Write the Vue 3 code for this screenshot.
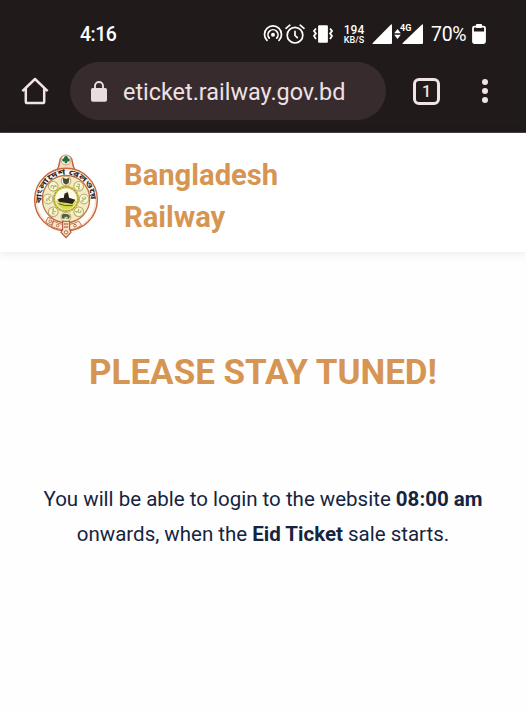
<script setup>
const medallions = [0, 45, 90, 135, 180, 225, 270, 315]
const spokes = Array.from({ length: 24 }, (_, i) => i * 15)
</script>

<template>
  <div class="screen">
    <div class="chrome">
      <div class="status">
        <span class="clock">4:16</span>
        <svg class="cast" width="20" height="20" viewBox="0 0 20 20" fill="none" stroke="#fff" stroke-width="1.7" stroke-linecap="round">
          <path d="M4 16.4A8.5 8.5 0 1 1 16 16.4" />
          <path d="M6.3 14.1A5 5 0 1 1 13.7 14.1" />
          <circle cx="10" cy="10.8" r="2" fill="#fff" stroke="none" />
        </svg>
        <svg class="alarm" width="20" height="20" viewBox="0 0 20 20" fill="none" stroke="#fff" stroke-width="1.7" stroke-linecap="round">
          <circle cx="10" cy="11.2" r="7.8" />
          <path d="M10 7.4V11.5L12.3 13.6M1 4.3L4.8 1.2M19 4.3L15.2 1.2" />
        </svg>
        <svg class="vibrate" width="20" height="18" viewBox="0 0 20 18">
          <rect x="5.1" y="0.3" width="9.8" height="17.4" rx="1" fill="#fff" />
          <path d="M3 3.5L1 6L2.9 8.5L1 11L3 14M17 3.5L19 6L17.1 8.5L19 11L17 14" fill="none" stroke="#fff" stroke-width="1.8" />
        </svg>
        <div class="speed"><b>194</b><span>KB/S</span></div>
        <svg class="signal" width="20" height="20" viewBox="0 0 20 20"><path d="M19 0.5Q20 0 20 1.2V19Q20 20 19 20H1Q0 20 .7 19Z" fill="#fff" /></svg>
        <svg class="arrows" width="7" height="10" viewBox="0 0 7 10" fill="#fff"><path d="M0.2 4.2L3.5 0L6.8 4.2ZM0.2 5.8L3.5 10L6.8 5.8Z" /></svg>
        <div class="cell">
          <svg width="21" height="20" viewBox="0 0 21 20"><path d="M20 0.5Q21 0 21 1.2V19Q21 20 20 20H1Q0 20 .7 19Z" fill="#fff" /></svg>
          <span>4G</span>
        </div>
        <span class="percent">70%</span>
        <svg class="battery" width="14" height="20" viewBox="0 0 14 20">
          <rect x="4" y="0" width="6" height="4" rx=".8" fill="#fff" />
          <rect x="1" y="2.6" width="12" height="16.4" rx="1.5" fill="none" stroke="#fff" stroke-width="1.8" />
          <rect x="1.2" y="7.5" width="11.6" height="11.5" fill="#fff" />
        </svg>
      </div>
      <div class="toolbar">
        <svg class="home" width="28" height="28" viewBox="0 0 28 28" fill="none" stroke="#f1e3e5" stroke-width="2.5" stroke-linejoin="round">
          <path d="M1.4 14.2L14 2L26.6 14.2M4.8 11V24.4Q4.8 26 6.4 26H21.6Q23.2 26 23.2 24.4V11" />
        </svg>
        <div class="omnibox">
          <svg width="16" height="21" viewBox="0 0 16 21">
            <path d="M4 8V5A4 4 0 0 1 12 5V8" fill="none" stroke="#eadde0" stroke-width="1.9" />
            <rect x="0" y="7" width="16" height="13.7" rx="1.8" fill="#eadde0" />
          </svg>
          <span>eticket.railway.gov.bd</span>
        </div>
        <div class="tabs">1</div>
        <div class="menu"><i></i><i></i><i></i></div>
      </div>
    </div>

    <header class="brand">
      <svg class="emblem" width="90" height="100" viewBox="0 0 270 300">
        <defs><path id="ringText" d="M66 180A74 74 0 1 1 210 180" /></defs>
        <path d="M108 78Q117 68 119 50A19 19 0 0 1 157 50Q159 68 168 78Z" fill="#f4dcc0" stroke="#bd6340" stroke-width="4" />
        <circle cx="138" cy="164" r="94" fill="#fffdf8" stroke="#c66b42" stroke-width="4.5" />
        <circle cx="138" cy="164" r="89" fill="none" stroke="#ecc9ae" stroke-width="2" />
        <circle cx="138" cy="45" r="15" fill="#fff9ee" stroke="#cf8a5f" stroke-width="2.5" />
        <g fill="#1f6a3c">
          <circle cx="138" cy="39" r="6" /><circle cx="132" cy="45" r="5.5" /><circle cx="144" cy="45" r="5.5" />
          <path d="M136 44H140L142 55H134Z" />
        </g>
        <circle cx="138" cy="162" r="71" fill="#f1ebc6" stroke="#bd693e" stroke-width="3.5" />
        <g v-for="a in medallions" :key="a" :transform="`rotate(${a} 138 162)`">
          <circle cx="138" cy="108" r="14.5" fill="#faf4d4" stroke="#bfa46a" stroke-width="3" />
          <path d="M131 107Q135 98 139 107T146 110M132 114L139 109L145 116" fill="none" stroke="#a9bc68" stroke-width="3.5" />
        </g>
        <path d="M128 98L138 102L148 98L146 113L138 119L130 113Z" fill="#4c4b38" />
        <path d="M126 219V210Q132 203 144 208L150 213L147 221H143V215H134V221H129Z" fill="#4f5c3e" />
        <circle cx="138" cy="162" r="36" fill="#fffbe9" stroke="#c9c24a" stroke-width="7" />
        <path v-for="s in spokes" :key="s" d="M138 123V128" stroke="#8d813c" stroke-width="2" :transform="`rotate(${s} 138 162)`" />
        <path d="M107 167H169Q164 190 139 194Q114 190 107 167Z" fill="#d7da52" />
        <path d="M112 164L122 159H131L134 145H139L141 139L145 147L147 158L166 164L157 177L141 174L119 171Z" fill="#29231d" />
        <path d="M116 176Q132 184 158 182" fill="none" stroke="#5f5a28" stroke-width="3" />
        <text class="ring-text"><textPath href="#ringText" startOffset="5" textLength="246" lengthAdjust="spacingAndGlyphs">বাংলাদেশ রেলওয়ে</textPath></text>
        <g fill="#fbecd9" stroke="#c0693f" stroke-width="2.8">
          <path d="M84 217L101 223L95 241L77 232Z" />
          <path d="M101 228Q117 238 130 238V254Q111 253 95 245Z" />
          <path d="M147 238Q164 237 176 228L185 241Q168 254 147 255Z" />
          <circle cx="91" cy="229" r="4" />
          <circle cx="113" cy="242" r="4" />
          <circle cx="165" cy="242" r="4" />
        </g>
        <path d="M128 229H149V253L153 262L138 278L123 262L128 253Z" fill="#f8dfbd" stroke="#aa5036" stroke-width="3.2" />
        <path d="M132 237H145M132 246H145" stroke="#9b4632" stroke-width="3" />
        <circle cx="138" cy="262" r="5" fill="#fff5e8" stroke="#aa5036" stroke-width="2.5" />
      </svg>
      <div class="name">Bangladesh<br>Railway</div>
    </header>

    <main>
      <h1>PLEASE STAY TUNED!</h1>
      <p>
        <span class="line first">You will be able to login to the website <b>08:00 am</b></span>
        <span class="line second">onwards, when the <b>Eid Ticket</b> sale starts.</span>
      </p>
    </main>
  </div>
</template>

<style>
body { margin: 0; background: #fefefe; }
</style>
<style scoped>
.screen { width: 526px; height: 714px; overflow: hidden; background: #fefefe; font-family: Roboto, sans-serif; }
svg { display: block; flex: none; }
.chrome { box-sizing: border-box; height: 133px; background: #211a1b; border-bottom: 1px solid #484142; }
.status { height: 62px; box-sizing: border-box; padding: 6px 0 0 80px; display: flex; align-items: center; color: #fff; }
.clock { width: 183px; font-size: 19.5px; font-weight: 500; line-height: 24px; letter-spacing: -.5px; padding-top: 1px; }
.alarm { margin-left: 2px; }
.cast, .alarm { margin-top: -1px; }
.vibrate { margin-left: 8px; }
.speed { width: 28px; margin-left: 7px; display: flex; flex: none; flex-direction: column; align-items: center; margin-right: -4px; }
.speed b { font-size: 12px; line-height: 12px; font-weight: 500; }
.speed span { font-size: 9px; line-height: 9px; font-weight: 500; }
.signal { margin-left: 8px; }
.arrows { margin-left: 2px; }
.cell { position: relative; margin-left: 1px; }
.cell span { position: absolute; left: -2px; top: 0; font-size: 9px; line-height: 9px; font-weight: 700; }
.percent { margin-left: 8px; width: 41px; font-size: 19.5px; line-height: 24px; letter-spacing: -.3px; padding-top: 1px; }
.battery { margin-top: -1px; }
.toolbar { height: 58px; padding-left: 21px; display: flex; align-items: center; }
.omnibox { box-sizing: border-box; width: 316px; height: 58px; margin-left: 21px; padding-left: 21px; border-radius: 29px; background: #382b2e; display: flex; align-items: center; gap: 16px; color: #eee1e4; font-size: 23.4px; line-height: 28px; }
.omnibox span { padding-top: 2px; }
.tabs { box-sizing: border-box; width: 27px; height: 27px; margin-left: 27px; border: 2.5px solid #f1e3e5; border-width: 3px; border-radius: 6px; color: #f1e3e5; text-align: center; font-size: 16px; line-height: 22px; font-weight: 500; }
.menu { margin-left: 42px; display: flex; flex-direction: column; gap: 3px; }
.menu i { width: 6px; height: 6px; border-radius: 50%; background: #f1e3e5; }
.brand { height: 119px; box-sizing: border-box; padding: 12px 0 0 20px; display: flex; background: #fff; box-shadow: 0 1px 10px rgba(0, 0, 0, .09); }
.name { margin: 9px 0 0 14px; height: 84px; color: #d69552; font-size: 29.2px; line-height: 42px; font-weight: 700; }
.ring-text { font-family: "Noto Sans Bengali", "Noto Sans", sans-serif; font-size: 22px; font-weight: 700; fill: #38251f; }
main { padding-top: 99px; text-align: center; }
h1 { margin: 0; color: #d69552; font-size: 35px; line-height: 44px; font-weight: 700; white-space: nowrap; }
p { margin: 87px 0 0; color: #152440; font-size: 20.5px; line-height: 35px; }
.line { display: block; white-space: nowrap; }
</style>
